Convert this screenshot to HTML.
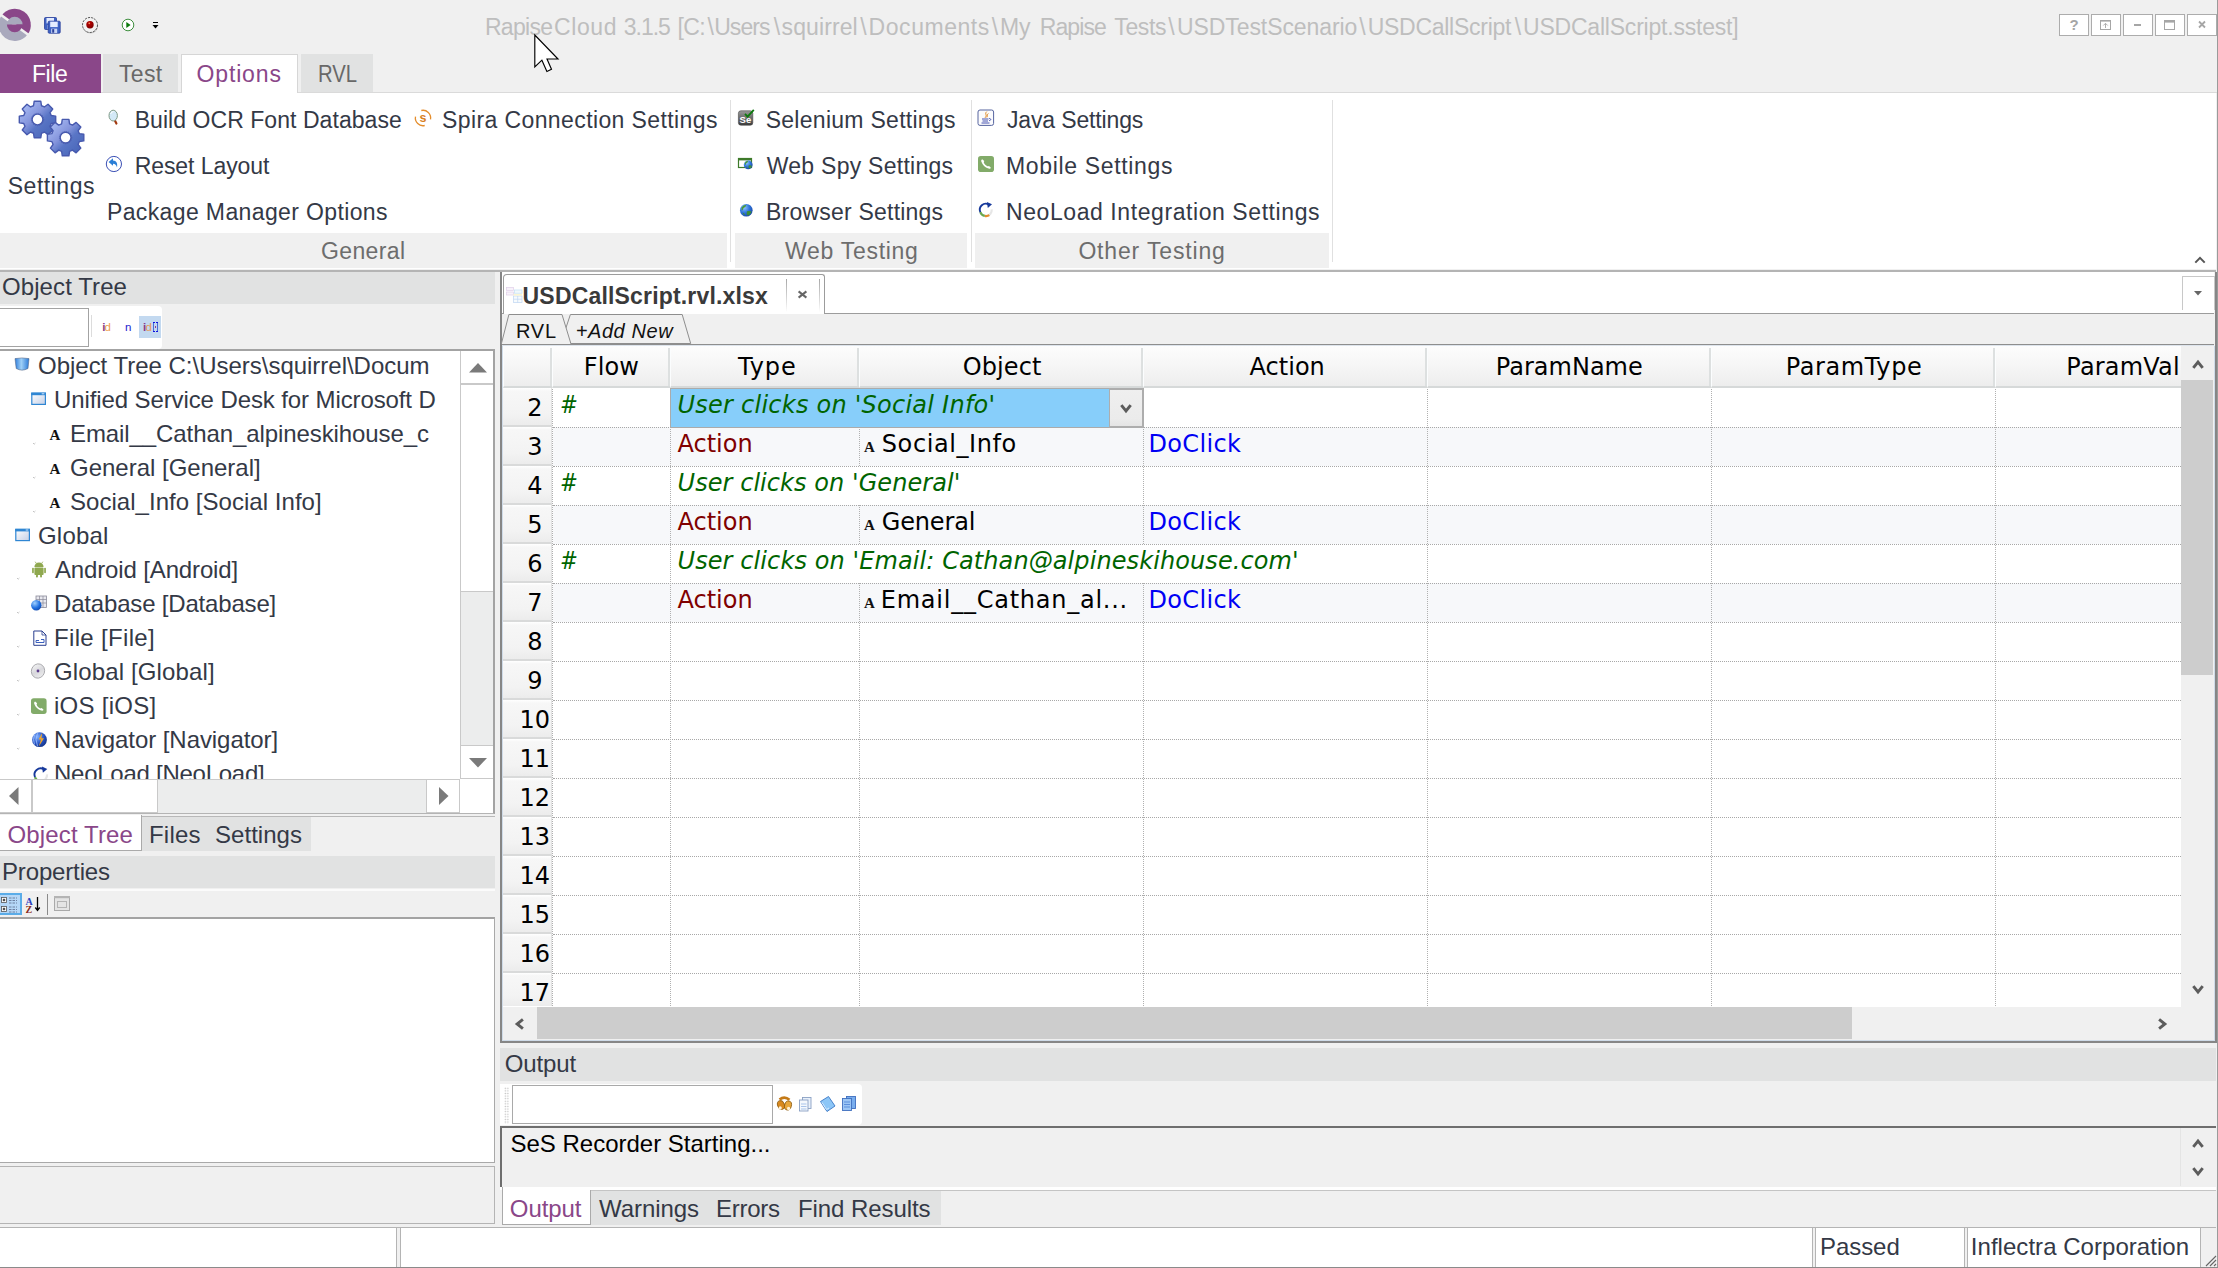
<!DOCTYPE html>
<html><head><meta charset="utf-8"><title>RapiseCloud</title>
<style>
html,body{margin:0;padding:0;}
body{width:2218px;height:1268px;overflow:hidden;background:#f0f0f0;position:relative;font-family:"Liberation Sans",Arial,sans-serif;}
div,span.t,svg{position:absolute;box-sizing:border-box;}
span.t{white-space:pre;}
.ls{font-family:"Liberation Sans",Arial,sans-serif;}
.dv{font-family:"DejaVu Sans",Verdana,"Liberation Sans",sans-serif;}
.sf{font-family:"Liberation Serif","DejaVu Serif",serif;}
</style></head><body>
<svg style="left:0px;top:0px" width="40" height="50" viewBox="0 0 40 50"><path d="M1.67 15.44 A16.1 16.1 0 0 1 27.73 34.36Z" fill="#8a4789"/><path d="M27.73 34.36 A16.1 16.1 0 0 1 1.67 15.44Z" fill="#a9a9bd"/><line x1="0.06" y1="14.26" x2="29.34" y2="35.54" stroke="#f0f0f0" stroke-width="2.6"/><path d="M6.8999999999999995 24.5 A7.8 7.8 0 0 1 22.5 24.5Z" fill="#a9a9bd"/><path d="M22.5 24.5 A7.8 7.8 0 0 1 6.8999999999999995 24.5Z" fill="#8a4789"/></svg>
<svg style="left:44px;top:17px" width="17" height="17" viewBox="0 0 17 17"><rect x="0.5" y="0.5" width="12" height="12" rx="1" fill="#3d62c4" stroke="#2a3f99" stroke-width="0.8"/><rect x="2.5" y="1.0" width="7.5" height="5.4" fill="#e4ecff"/><rect x="3.5" y="7.9399999999999995" width="6" height="4.32" fill="#c9d6f5"/><rect x="4.5" y="8.42" width="2" height="3.5999999999999996" fill="#2a3f99"/><rect x="4.2" y="4.2" width="12" height="12" rx="1" fill="#3d62c4" stroke="#2a3f99" stroke-width="0.8"/><rect x="6.2" y="4.7" width="7.5" height="5.4" fill="#e4ecff"/><rect x="7.2" y="11.64" width="6" height="4.32" fill="#c9d6f5"/><rect x="8.2" y="12.120000000000001" width="2" height="3.5999999999999996" fill="#2a3f99"/></svg>
<svg style="left:80px;top:14.8px" width="20" height="20" viewBox="0 0 20 20"><defs><radialGradient id="rg1" cx="0.4" cy="0.3" r="0.7"><stop offset="0" stop-color="#ffb070"/><stop offset="0.25" stop-color="#b00000"/><stop offset="1" stop-color="#7a0000"/></radialGradient></defs><circle cx="10.5" cy="10.8" r="7.6" fill="#c8c8c8"/><circle cx="10" cy="10" r="7.5" fill="#f2f2f2" stroke="#444" stroke-width="0.9" stroke-dasharray="2.2 1.1"/><circle cx="10" cy="9.8" r="3.7" fill="url(#rg1)"/></svg>
<svg style="left:120.1px;top:17.2px" width="16" height="16" viewBox="0 0 16 16"><circle cx="8" cy="8" r="5.8" fill="#fff" stroke="#3f8f3f" stroke-width="1"/><path d="M6.3 4.9 L10.6 8 L6.3 11.1Z" fill="#0a7a0a"/></svg>
<div style="left:153px;top:22px;width:5px;height:1px;background:#000;"></div>
<svg style="left:152px;top:25px" width="7" height="4" viewBox="0 0 7 4"><path d="M0.5 0 L6.5 0 L3.5 3.5Z" fill="#000"/></svg>
<span class="t ls" style="top:16.13px;font-size:23px;line-height:23px;color:#bebebe;left:484.9px;letter-spacing:-0.681px;">Rapise</span>
<span class="t ls" style="top:16.13px;font-size:23px;line-height:23px;color:#bebebe;left:554.1px;letter-spacing:0.574px;">Cloud</span>
<span class="t ls" style="top:16.13px;font-size:23px;line-height:23px;color:#bebebe;left:623.8px;letter-spacing:-1.041px;">3.1.5 </span>
<span class="t ls" style="top:16.13px;font-size:23px;line-height:23px;color:#bebebe;left:677.6px;letter-spacing:-0.65px;">[C:</span>
<span class="t ls" style="top:16.13px;font-size:23px;line-height:23px;color:#bebebe;left:714.2px;letter-spacing:-0.94px;">Users</span>
<span class="t ls" style="top:16.13px;font-size:23px;line-height:23px;color:#bebebe;left:781.6px;letter-spacing:0.1px;">squirrel</span>
<span class="t ls" style="top:16.13px;font-size:23px;line-height:23px;color:#bebebe;left:868.6px;letter-spacing:0.547px;">Documents</span>
<span class="t ls" style="top:16.13px;font-size:23px;line-height:23px;color:#bebebe;left:999.9px;letter-spacing:-0.059px;">My </span>
<span class="t ls" style="top:16.13px;font-size:23px;line-height:23px;color:#bebebe;left:1039.7px;letter-spacing:-0.901px;">Rapise </span>
<span class="t ls" style="top:16.13px;font-size:23px;line-height:23px;color:#bebebe;left:1114.3px;letter-spacing:-0.37px;">Tests</span>
<span class="t ls" style="top:16.13px;font-size:23px;line-height:23px;color:#bebebe;left:1177px;letter-spacing:-0.088px;">USDTestScenario</span>
<span class="t ls" style="top:16.13px;font-size:23px;line-height:23px;color:#bebebe;left:1367.7px;letter-spacing:-0.274px;">USDCallScript</span>
<span class="t ls" style="top:16.13px;font-size:23px;line-height:23px;color:#bebebe;left:1523px;letter-spacing:-0.207px;">USDCallScript.sstest]</span>
<span class="t ls" style="top:16.13px;font-size:23px;line-height:23px;color:#bebebe;left:707.4px;">\</span>
<span class="t ls" style="top:16.13px;font-size:23px;line-height:23px;color:#bebebe;left:773.8px;">\</span>
<span class="t ls" style="top:16.13px;font-size:23px;line-height:23px;color:#bebebe;left:860.3px;">\</span>
<span class="t ls" style="top:16.13px;font-size:23px;line-height:23px;color:#bebebe;left:991.8px;">\</span>
<span class="t ls" style="top:16.13px;font-size:23px;line-height:23px;color:#bebebe;left:1168.3px;">\</span>
<span class="t ls" style="top:16.13px;font-size:23px;line-height:23px;color:#bebebe;left:1359.3px;">\</span>
<span class="t ls" style="top:16.13px;font-size:23px;line-height:23px;color:#bebebe;left:1514.8px;">\</span>
<div style="left:2059px;top:14px;width:30px;height:22px;background:#fff;border:1px solid #acacac;"></div>
<div style="left:2091px;top:14px;width:30px;height:22px;background:#fff;border:1px solid #acacac;"></div>
<div style="left:2123px;top:14px;width:30px;height:22px;background:#fff;border:1px solid #acacac;"></div>
<div style="left:2155px;top:14px;width:30px;height:22px;background:#fff;border:1px solid #acacac;"></div>
<div style="left:2187px;top:14px;width:30px;height:22px;background:#fff;border:1px solid #acacac;"></div>
<span class="t ls" style="left:2059px;top:15px;width:30px;text-align:center;font-size:15px;line-height:20px;font-weight:bold;color:#a6a6a6">?</span>
<svg style="left:2091px;top:14px" width="30" height="22" viewBox="0 0 30 22"><rect x="9.5" y="6.5" width="10" height="9" fill="none" stroke="#a6a6a6" stroke-width="1"/><rect x="9" y="6" width="11" height="1.6" fill="#a6a6a6"/><path d="M14.5 14 L14.5 9.5 M12.3 11.5 L14.5 9.3 L16.7 11.5" fill="none" stroke="#a6a6a6" stroke-width="0.9"/></svg>
<div style="left:2134px;top:24px;width:7px;height:2px;background:#a6a6a6;"></div>
<svg style="left:2155px;top:14px" width="30" height="22" viewBox="0 0 30 22"><rect x="9.5" y="6.5" width="10" height="9" fill="none" stroke="#a6a6a6" stroke-width="1"/><rect x="9" y="6" width="11" height="2.6" fill="#a6a6a6"/></svg>
<svg style="left:2187px;top:14px" width="30" height="22" viewBox="0 0 30 22"><path d="M12 7.5 L18 13.5 M18 7.5 L12 13.5" stroke="#a6a6a6" stroke-width="1.8"/></svg>
<div style="left:0px;top:92px;width:2218px;height:1px;background:#dadada;"></div>
<div style="left:0px;top:54px;width:101px;height:39px;background:#8a4789;"></div>
<span class="t ls" style="top:62.53px;font-size:23px;line-height:23px;color:#fff;left:31.9px;letter-spacing:-0.39px;">File</span>
<div style="left:102.6px;top:54px;width:75.4px;height:38px;background:#e1e2e2;"></div>
<span class="t ls" style="top:62.53px;font-size:23px;line-height:23px;color:#686868;left:119px;letter-spacing:0.336px;">Test</span>
<div style="left:181px;top:54px;width:117px;height:39px;background:#fff;border:1px solid #d6d6d6;border-bottom:none;"></div>
<span class="t ls" style="top:62.53px;font-size:23px;line-height:23px;color:#8a4789;left:196.5px;letter-spacing:0.856px;">Options</span>
<div style="left:301px;top:54px;width:72px;height:38px;background:#e1e2e2;"></div>
<span class="t ls" style="top:62.53px;font-size:23px;line-height:23px;color:#686868;left:317.92px;transform:scaleX(0.882);transform-origin:0 0;">RVL</span>
<div style="left:0px;top:93px;width:2216px;height:176px;background:#fff;"></div>
<div style="left:0px;top:233px;width:727px;height:35px;background:#f0f0f0;"></div>
<div style="left:735px;top:233px;width:232px;height:35px;background:#f0f0f0;"></div>
<div style="left:975px;top:233px;width:354px;height:35px;background:#f0f0f0;"></div>
<div style="left:730px;top:100px;width:1px;height:162px;background:#e0e0e0;"></div>
<div style="left:971px;top:100px;width:1px;height:162px;background:#e0e0e0;"></div>
<div style="left:1332px;top:100px;width:1px;height:162px;background:#e0e0e0;"></div>
<svg style="left:10px;top:95px" width="80" height="66" viewBox="0 0 80 66"><defs><linearGradient id="gg" x1="0" y1="0" x2="1" y2="1"><stop offset="0.1" stop-color="#a9bcf4"/><stop offset="0.42" stop-color="#8595dc"/><stop offset="0.58" stop-color="#5a76c6"/><stop offset="1" stop-color="#4361b4"/></linearGradient></defs><path d="M23.51 10.77 L24.18 6.30 L30.82 6.30 L31.49 10.77 L34.39 11.97 L38.02 9.28 L42.72 13.98 L40.03 17.61 L41.23 20.51 L45.70 21.18 L45.70 27.82 L41.23 28.49 L40.03 31.39 L42.72 35.02 L38.02 39.72 L34.39 37.03 L31.49 38.23 L30.82 42.70 L24.18 42.70 L23.51 38.23 L20.61 37.03 L16.98 39.72 L12.28 35.02 L14.97 31.39 L13.77 28.49 L9.30 27.82 L9.30 21.18 L13.77 20.51 L14.97 17.61 L12.28 13.98 L16.98 9.28 L20.61 11.97Z M22.1 24.5 a5.4 5.4 0 1 0 10.8 0 a5.4 5.4 0 1 0 -10.8 0Z" fill="url(#gg)" fill-rule="evenodd" stroke="#4759ae" stroke-width="1.4" stroke-linejoin="round"/><circle cx="27.5" cy="24.5" r="6.2" fill="none" stroke="#4b5fae" stroke-width="1" stroke-dasharray="1.2 1" opacity="0.8"/><path d="M51.61 28.87 L52.28 24.40 L58.92 24.40 L59.59 28.87 L62.49 30.07 L66.12 27.38 L70.82 32.08 L68.13 35.71 L69.33 38.61 L73.80 39.28 L73.80 45.92 L69.33 46.59 L68.13 49.49 L70.82 53.12 L66.12 57.82 L62.49 55.13 L59.59 56.33 L58.92 60.80 L52.28 60.80 L51.61 56.33 L48.71 55.13 L45.08 57.82 L40.38 53.12 L43.07 49.49 L41.87 46.59 L37.40 45.92 L37.40 39.28 L41.87 38.61 L43.07 35.71 L40.38 32.08 L45.08 27.38 L48.71 30.07Z M50.2 42.6 a5.4 5.4 0 1 0 10.8 0 a5.4 5.4 0 1 0 -10.8 0Z" fill="url(#gg)" fill-rule="evenodd" stroke="#4759ae" stroke-width="1.4" stroke-linejoin="round"/><circle cx="55.6" cy="42.6" r="6.2" fill="none" stroke="#4b5fae" stroke-width="1" stroke-dasharray="1.2 1" opacity="0.8"/></svg>
<span class="t ls" style="top:174.53px;font-size:23px;line-height:23px;color:#343946;left:7.7px;letter-spacing:0.528px;">Settings</span>
<span class="t ls" style="top:109.03px;font-size:23px;line-height:23px;color:#343946;left:134.7px;letter-spacing:0.054px;">Build OCR Font Database</span>
<span class="t ls" style="top:155.23px;font-size:23px;line-height:23px;color:#343946;left:134.7px;letter-spacing:-0.076px;">Reset Layout</span>
<span class="t ls" style="top:201.13px;font-size:23px;line-height:23px;color:#343946;left:107px;letter-spacing:0.371px;">Package Manager Options</span>
<span class="t ls" style="top:109.03px;font-size:23px;line-height:23px;color:#343946;left:442px;letter-spacing:0.398px;">Spira Connection Settings</span>
<span class="t ls" style="top:109.03px;font-size:23px;line-height:23px;color:#343946;left:765.7px;letter-spacing:0.276px;">Selenium Settings</span>
<span class="t ls" style="top:155.23px;font-size:23px;line-height:23px;color:#343946;left:766.7px;letter-spacing:0.267px;">Web Spy Settings</span>
<span class="t ls" style="top:201.13px;font-size:23px;line-height:23px;color:#343946;left:766px;letter-spacing:0.217px;">Browser Settings</span>
<span class="t ls" style="top:109.03px;font-size:23px;line-height:23px;color:#343946;left:1007px;letter-spacing:-0.148px;">Java Settings</span>
<span class="t ls" style="top:155.23px;font-size:23px;line-height:23px;color:#343946;left:1006px;letter-spacing:0.661px;">Mobile Settings</span>
<span class="t ls" style="top:201.13px;font-size:23px;line-height:23px;color:#343946;left:1006px;letter-spacing:0.577px;">NeoLoad Integration Settings</span>
<span class="t ls" style="top:240.13px;font-size:23px;line-height:23px;color:#6d6d6d;left:321px;letter-spacing:0.381px;">General</span>
<span class="t ls" style="top:240.13px;font-size:23px;line-height:23px;color:#6d6d6d;left:785px;letter-spacing:0.715px;">Web Testing</span>
<span class="t ls" style="top:240.13px;font-size:23px;line-height:23px;color:#6d6d6d;left:1078.4px;letter-spacing:0.842px;">Other Testing</span>
<svg style="left:106px;top:108px" width="16" height="18" viewBox="0 0 16 18"><line x1="8.9" y1="12.6" x2="10.4" y2="15.6" stroke="#a33a10" stroke-width="2.2" stroke-linecap="round"/><ellipse cx="7.2" cy="7.6" rx="4.2" ry="5.4" fill="#d3e9f7" stroke="#7f9a86" stroke-width="1"/><path d="M4.6 6 A3 4 0 0 1 7.6 3.6" stroke="#fff" stroke-width="1" fill="none"/></svg>
<svg style="left:105px;top:155px" width="18" height="18" viewBox="0 0 18 18"><circle cx="8.9" cy="9" r="7.6" fill="#fff" stroke="#3b50b5" stroke-width="1"/><path d="M3.6 7 L8 3.2 L8 5.6 C11.5 5.6 12.8 8.5 12 12.6 C11.3 10 10.2 8.8 8 8.8 L8 10.8Z" fill="#2b7fd6"/></svg>
<svg style="left:413px;top:108px" width="20" height="20" viewBox="0 0 20 20"><path d="M8.3 2.5 A7.6 7.6 0 0 1 17.5 11.3" fill="none" stroke="#e48d2c" stroke-width="1.3"/><path d="M11.7 17.5 A7.6 7.6 0 0 1 2.5 8.7" fill="none" stroke="#e48d2c" stroke-width="1.3"/><text x="10" y="13.6" text-anchor="middle" font-family="Liberation Sans,Arial,sans-serif" font-weight="bold" font-size="12.5" fill="#d9811f">s</text></svg>
<svg style="left:737px;top:108px" width="19" height="19" viewBox="0 0 19 19"><defs><linearGradient id="seg" x1="0" y1="0" x2="0" y2="1"><stop offset="0" stop-color="#9a9a9a"/><stop offset="1" stop-color="#3c3c3c"/></linearGradient></defs><rect x="1.4" y="2.8" width="14.4" height="14.4" rx="2.5" fill="url(#seg)" stroke="#444" stroke-width="0.6"/><text x="8.4" y="14.6" text-anchor="middle" font-family="Liberation Sans,Arial,sans-serif" font-weight="bold" font-size="9.5" fill="#fff">Se</text><path d="M8 5.8 L10.6 8.6 L16.8 1.8" fill="none" stroke="#0d7a0d" stroke-width="1.8"/></svg>
<svg style="left:737px;top:157px" width="18" height="14" viewBox="0 0 18 14"><rect x="1.5" y="1.5" width="13" height="9" fill="#fff" stroke="#3e7a2a" stroke-width="1.2"/><rect x="1" y="1" width="14" height="2.4" fill="#3e7a2a"/><defs><radialGradient id="gl2" cx="0.35" cy="0.3" r="0.8"><stop offset="0" stop-color="#8fc3ff"/><stop offset="0.5" stop-color="#2f75dd"/><stop offset="1" stop-color="#173f9c"/></radialGradient></defs><circle cx="11.2" cy="7.8" r="4.4" fill="url(#gl2)"/><path d="M7.899999999999999 5.819999999999999 q1.32 -1.9800000000000002 3.3000000000000003 -1.9800000000000002 q-0.44000000000000006 2.2 -1.9800000000000002 2.4200000000000004 q-0.44000000000000006 1.9800000000000002 -1.32 1.54Z" fill="#4a9a3a"/><path d="M11.639999999999999 8.459999999999999 q2.2 -0.44000000000000006 3.3000000000000003 0.44000000000000006 q-0.8800000000000001 2.2 -2.64 2.64 q-1.32 -1.32 -0.66 -3.08Z" fill="#3e8f35"/><path d="M8.559999999999999 9.34 q1.32 0.22000000000000003 1.7600000000000002 1.9800000000000002 q-1.32 -0.22000000000000003 -1.7600000000000002 -1.9800000000000002Z" fill="#3e8f35"/></svg>
<svg style="left:739.1px;top:203.0px" width="14.6" height="14.6" viewBox="0 0 14.6 14.6"><defs><radialGradient id="gl1" cx="0.35" cy="0.3" r="0.8"><stop offset="0" stop-color="#8fc3ff"/><stop offset="0.5" stop-color="#2f75dd"/><stop offset="1" stop-color="#173f9c"/></radialGradient></defs><circle cx="7.3" cy="7.3" r="6.3" fill="url(#gl1)"/><path d="M2.575 4.465 q1.89 -2.835 4.725 -2.835 q-0.63 3.15 -2.835 3.4650000000000003 q-0.63 2.835 -1.89 2.2049999999999996Z" fill="#4a9a3a"/><path d="M7.93 8.245 q3.15 -0.63 4.725 0.63 q-1.26 3.15 -3.78 3.78 q-1.89 -1.89 -0.945 -4.409999999999999Z" fill="#3e8f35"/><path d="M3.52 9.504999999999999 q1.89 0.315 2.52 2.835 q-1.89 -0.315 -2.52 -2.835Z" fill="#3e8f35"/></svg>
<svg style="left:977px;top:109px" width="18" height="18" viewBox="0 0 18 18"><rect x="1" y="1" width="15.6" height="15.4" rx="2" fill="#fbfbfd" stroke="#56649f" stroke-width="1"/><path d="M9.8 2.6 C7 5 11 6 8 8.8 M11.3 4.5 C9.6 6 11 6.8 9.8 8.4" fill="none" stroke="#e0851c" stroke-width="1"/><path d="M5 10 H11.5 M12 9.5 C14.3 9.3 14.3 11.6 12 11.6 M5.5 12 H11 M4.5 14 H12.5" fill="none" stroke="#4653b0" stroke-width="1"/></svg>
<svg style="left:978px;top:156px" width="16" height="16" viewBox="0 0 16 16"><rect x="0" y="0" width="16" height="16" rx="2.8" fill="#82ab69"/><path transform="translate(0,0) scale(1.0)" d="M4.2 3.2 C3.2 3.6 3 4.6 3.4 5.8 C4.6 9 7 11.4 10.4 12.6 C11.6 13 12.6 12.6 12.9 11.7 L11 9.9 C10.4 10.2 10 10.5 9.4 10.3 C7.8 9.6 6.5 8.3 5.8 6.6 C5.7 6 6 5.6 6.3 5.1Z" fill="#fff"/></svg>
<svg style="left:975.9px;top:199.7px" width="20" height="20" viewBox="0 0 20 20"><path d="M15.7 9.4 A6 6 0 0 1 10 16" fill="none" stroke="#e6e6e6" stroke-width="2.2"/><path d="M13.3 15.1 A6 6 0 0 1 8.8 15.879999999999999" fill="none" stroke="#e48d2c" stroke-width="2.2"/><path d="M8.8 15.879999999999999 A6 6 0 0 1 4.300000000000001 12.1" fill="none" stroke="#6aa84f" stroke-width="2.2"/><path d="M4.300000000000001 12.1 A6 6 0 0 1 12.7 4.4799999999999995" fill="none" stroke="#17399b" stroke-width="1.9"/><path d="M10.9 1.8999999999999986 L16.0 4.300000000000001 L11.8 7.9Z" fill="#17399b"/></svg>
<svg style="left:2194px;top:255.5px" width="12" height="8" viewBox="0 0 12 8"><path d="M1.3 6.6 L6 1.9 L10.7 6.6" fill="none" stroke="#555" stroke-width="2"/></svg>
<div style="left:0px;top:270px;width:2216px;height:2px;background:#b4b4b4;"></div>
<div style="left:2217px;top:0px;width:1px;height:1268px;background:#9a9a9a;"></div>
<div style="left:0px;top:272px;width:495px;height:32px;background:#e1e2e2;"></div>
<span class="t ls" style="top:275.18px;font-size:24px;line-height:24px;color:#343946;left:2px;letter-spacing:0.086px;">Object Tree</span>
<div style="left:0px;top:306px;width:162px;height:43px;background:#fff;border-radius:0 4px 4px 0;"></div>
<div style="left:-2px;top:308px;width:91px;height:39px;background:#fff;border:1.5px solid #a3a3a3;"></div>
<div style="left:91px;top:315px;width:1px;height:22px;background:#dcdcdc;"></div>
<span class="t ls" style="top:322.27px;font-size:11.5px;line-height:11.5px;color:#8a3a8a;left:102.2px;font-weight:bold;">i</span>
<span class="t ls" style="top:322.27px;font-size:11.5px;line-height:11.5px;color:#f0a050;left:104.6px;">d</span>
<span class="t ls" style="top:322.27px;font-size:11.5px;line-height:11.5px;color:#2222d0;left:125px;">n</span>
<div style="left:139px;top:316px;width:22px;height:22px;background:#c3d9f0;"></div>
<span class="t ls" style="top:322.27px;font-size:11.5px;line-height:11.5px;color:#8a3a8a;left:143px;font-weight:bold;">i</span>
<span class="t ls" style="top:322.27px;font-size:11.5px;line-height:11.5px;color:#e89858;left:145.6px;">d</span>
<div style="left:152.6px;top:322px;width:1.3px;height:10px;background:#4a6ad8;"></div>
<div style="left:152.6px;top:322px;width:2.1px;height:1.4px;background:#1010e0;"></div>
<div style="left:152.6px;top:330.6px;width:2.1px;height:1.4px;background:#1010e0;"></div>
<div style="left:157px;top:322px;width:1.3px;height:10px;background:#4a6ad8;"></div>
<div style="left:156.1px;top:322px;width:2.2px;height:1.4px;background:#1010e0;"></div>
<div style="left:156.1px;top:330.6px;width:2.2px;height:1.4px;background:#1010e0;"></div>
<div style="left:154.7px;top:326.2px;width:1.4px;height:1.8px;background:#9a3a8a;"></div>
<div style="left:0px;top:349px;width:495px;height:465px;background:#fff;border:2px solid #a3a3a3;border-left:none;border-bottom:1px solid #b4b4b4;"></div>
<div style="left:460px;top:351px;width:33px;height:428px;background:#eceded;border-left:1px solid #c9c9c9;"></div>
<div style="left:460px;top:351px;width:33px;height:33px;background:#fff;border:1px solid #c9c9c9;border-top:none;border-right:none;"></div>
<div style="left:460px;top:384px;width:33px;height:208px;background:#fff;border:1px solid #c9c9c9;border-right:none;"></div>
<div style="left:460px;top:745px;width:33px;height:34px;background:#fff;border:1px solid #c9c9c9;border-right:none;"></div>
<svg style="left:469px;top:363px" width="18" height="10" viewBox="0 0 18 10"><path d="M0 9.5 L9 0 L18 9.5Z" fill="#7a7a7a"/></svg>
<svg style="left:469px;top:757.8px" width="18" height="10" viewBox="0 0 18 10"><path d="M0 0 L18 0 L9 9.5Z" fill="#7a7a7a"/></svg>
<div style="left:0px;top:779px;width:460px;height:34px;background:#eceded;border-top:1px solid #c9c9c9;"></div>
<div style="left:0px;top:779px;width:32px;height:34px;background:#fff;border:1px solid #c9c9c9;border-left:none;"></div>
<div style="left:32px;top:779px;width:126px;height:34px;background:#fff;border:1px solid #c9c9c9;"></div>
<div style="left:426px;top:779px;width:34px;height:34px;background:#fff;border:1px solid #c9c9c9;"></div>
<div style="left:460px;top:779px;width:33px;height:34px;background:#fff;"></div>
<svg style="left:9px;top:787px" width="10" height="18" viewBox="0 0 10 18"><path d="M9.5 0 L9.5 18 L0 9Z" fill="#7a7a7a"/></svg>
<svg style="left:439px;top:787px" width="10" height="18" viewBox="0 0 10 18"><path d="M0 0 L9.5 9 L0 18Z" fill="#7a7a7a"/></svg>
<span class="t ls" style="top:354.18px;font-size:24px;line-height:24px;color:#343946;left:38px;letter-spacing:-0.016px;">Object Tree C:\Users\squirrel\Docum</span>
<span class="t ls" style="top:388.18px;font-size:24px;line-height:24px;color:#343946;left:54px;letter-spacing:-0.103px;">Unified Service Desk for Microsoft D</span>
<span class="t ls" style="top:422.18px;font-size:24px;line-height:24px;color:#343946;left:70px;letter-spacing:-0.089px;">Email__Cathan_alpineskihouse_c</span>
<span class="t ls" style="top:456.18px;font-size:24px;line-height:24px;color:#343946;left:70px;letter-spacing:-0.006px;">General [General]</span>
<span class="t ls" style="top:490.18px;font-size:24px;line-height:24px;color:#343946;left:70px;letter-spacing:0.035px;">Social_Info [Social Info]</span>
<span class="t ls" style="top:524.18px;font-size:24px;line-height:24px;color:#343946;left:38px;letter-spacing:0.191px;">Global</span>
<span class="t ls" style="top:558.18px;font-size:24px;line-height:24px;color:#343946;left:55px;letter-spacing:-0.143px;">Android [Android]</span>
<span class="t ls" style="top:592.18px;font-size:24px;line-height:24px;color:#343946;left:54px;letter-spacing:-0.178px;">Database [Database]</span>
<span class="t ls" style="top:626.18px;font-size:24px;line-height:24px;color:#343946;left:54px;letter-spacing:0.332px;">File [File]</span>
<span class="t ls" style="top:660.18px;font-size:24px;line-height:24px;color:#343946;left:54px;letter-spacing:0.137px;">Global [Global]</span>
<span class="t ls" style="top:694.18px;font-size:24px;line-height:24px;color:#343946;left:54px;letter-spacing:0.269px;">iOS [iOS]</span>
<span class="t ls" style="top:728.18px;font-size:24px;line-height:24px;color:#343946;left:54px;letter-spacing:-0.063px;">Navigator [Navigator]</span>
<div style="left:0;top:755px;width:460px;height:24px;overflow:hidden">
<span class="t ls" style="top:7.18px;font-size:24px;line-height:24px;color:#343946;left:54px;letter-spacing:-0.261px;">NeoLoad [NeoLoad]</span>
<svg style="left:30.9px;top:10px" width="20" height="20" viewBox="0 0 20 20"><path d="M15.985 9.37 A6.3 6.3 0 0 1 10 16.3" fill="none" stroke="#e6e6e6" stroke-width="2.2"/><path d="M13.465 15.355 A6.3 6.3 0 0 1 8.74 16.174" fill="none" stroke="#e48d2c" stroke-width="2.2"/><path d="M8.74 16.174 A6.3 6.3 0 0 1 4.015000000000001 12.205" fill="none" stroke="#6aa84f" stroke-width="2.2"/><path d="M4.015000000000001 12.205 A6.3 6.3 0 0 1 12.835 4.204" fill="none" stroke="#17399b" stroke-width="1.9"/><path d="M10.945 1.4949999999999992 L16.3 4.015000000000001 L11.89 7.795Z" fill="#17399b"/></svg>
</div>
<svg style="left:0;top:0" width="60" height="779" viewBox="0 0 60 779"><defs><linearGradient id="bk" x1="0" y1="0" x2="1" y2="0"><stop offset="0" stop-color="#2f7ddb"/><stop offset="0.45" stop-color="#9fd0f7"/><stop offset="1" stop-color="#2c7bd8"/></linearGradient></defs><path d="M15 358.6 Q22 357.2 29 358.6 L28 368.5 Q22 371.8 16.2 368.5Z" fill="url(#bk)" stroke="#4a5a78" stroke-width="0.5"/><defs><linearGradient id="wi31392" x1="0" y1="0" x2="1" y2="1"><stop offset="0" stop-color="#ffffff"/><stop offset="1" stop-color="#c4cfe6"/></linearGradient></defs><rect x="31.8" y="393.20000000000005" width="13.6" height="11.2" fill="url(#wi31392)" stroke="#2f86d3" stroke-width="1.2"/><rect x="31.2" y="392.6" width="14.8" height="2.6" fill="#2f86d3"/><rect x="41.7" y="393.3" width="2.6" height="1" fill="#cfe6ff"/><defs><linearGradient id="wi15528" x1="0" y1="0" x2="1" y2="1"><stop offset="0" stop-color="#ffffff"/><stop offset="1" stop-color="#c4cfe6"/></linearGradient></defs><rect x="15.799999999999999" y="529.4" width="13.6" height="11.2" fill="url(#wi15528)" stroke="#2f86d3" stroke-width="1.2"/><rect x="15.2" y="528.8" width="14.8" height="2.6" fill="#2f86d3"/><rect x="25.7" y="529.5" width="2.6" height="1" fill="#cfe6ff"/><g fill="#8fa84f"><path d="M34.4 566.9 a4.6 4.4 0 0 1 9.2 0Z"/><rect x="34.4" y="567.5" width="9.2" height="7.4" rx="1"/><rect x="32.1" y="567.7" width="1.7" height="5.6" rx="0.8"/><rect x="44.2" y="567.7" width="1.7" height="5.6" rx="0.8"/><rect x="36" y="574.5" width="1.9" height="3" rx="0.8"/><rect x="40.1" y="574.5" width="1.9" height="3" rx="0.8"/><path d="M36.4 563.5 L35.2 561.7 M41.6 563.5 L42.8 561.7" stroke="#8fa84f" stroke-width="0.8"/></g><rect x="36" y="596" width="10.5" height="11.5" fill="#e8e8ee" stroke="#8a8a9a" stroke-width="0.8"/><path d="M36 599.5 H46.5 M36 603 H46.5 M39.5 596 V607.5 M43 596 V607.5" stroke="#8a8a9a" stroke-width="0.7"/><defs><radialGradient id="dbg" cx="0.35" cy="0.3" r="0.8"><stop offset="0" stop-color="#9fd0ff"/><stop offset="0.6" stop-color="#1f6fe0"/><stop offset="1" stop-color="#1246a8"/></radialGradient></defs><circle cx="36.3" cy="605.2" r="5.2" fill="url(#dbg)"/><path d="M33.8 631 H42 L46 635 V645.3 H33.8Z" fill="#fff" stroke="#2a3f8f" stroke-width="1"/><path d="M42 631 V635 H46" fill="none" stroke="#2a3f8f" stroke-width="0.8"/><path d="M36 642.5 H44 V639.5 H41 M36 642.5 V640.5 H39" fill="none" stroke="#3a5fbf" stroke-width="1"/><defs><linearGradient id="cdg" x1="0" y1="0" x2="1" y2="1"><stop offset="0" stop-color="#fafafa"/><stop offset="0.5" stop-color="#d8d8dc"/><stop offset="1" stop-color="#f4f4f4"/></linearGradient></defs><ellipse cx="38" cy="671" rx="6.6" ry="7.2" transform="rotate(18 38 671)" fill="url(#cdg)" stroke="#a9a9ad" stroke-width="0.9"/><circle cx="38" cy="671" r="1.4" fill="#5a3a8a"/><rect x="31" y="698.3" width="15.6" height="15.6" rx="2.73" fill="#82ab69"/><path transform="translate(31,698.3) scale(0.975)" d="M4.2 3.2 C3.2 3.6 3 4.6 3.4 5.8 C4.6 9 7 11.4 10.4 12.6 C11.6 13 12.6 12.6 12.9 11.7 L11 9.9 C10.4 10.2 10 10.5 9.4 10.3 C7.8 9.6 6.5 8.3 5.8 6.6 C5.7 6 6 5.6 6.3 5.1Z" fill="#fff"/><defs><radialGradient id="nvg" cx="0.35" cy="0.3" r="0.8"><stop offset="0" stop-color="#7fb0ff"/><stop offset="0.6" stop-color="#2450c0"/><stop offset="1" stop-color="#14307a"/></radialGradient></defs><circle cx="39.5" cy="739.7" r="7.4" fill="url(#nvg)"/><path d="M37.5 733.2 q-3 6 0 13 M34.5 735 q-2 4.5 0 9.5" stroke="#9fc0ff" stroke-width="0.8" fill="none"/><path d="M42.3 732.8 L38.6 739.6 L41 739.6 L38.8 746.6 L44 738.2 L41.4 738.2Z" fill="#f5a623"/><path d="M33 443 l1.2 1.2 l1.2 -1.2" fill="none" stroke="#b4b4b4" stroke-width="0.8"/><path d="M33 477 l1.2 1.2 l1.2 -1.2" fill="none" stroke="#b4b4b4" stroke-width="0.8"/><path d="M33 511 l1.2 1.2 l1.2 -1.2" fill="none" stroke="#b4b4b4" stroke-width="0.8"/><path d="M17 578 l1.2 1.2 l1.2 -1.2" fill="none" stroke="#b4b4b4" stroke-width="0.8"/><path d="M17 612 l1.2 1.2 l1.2 -1.2" fill="none" stroke="#b4b4b4" stroke-width="0.8"/><path d="M17 646 l1.2 1.2 l1.2 -1.2" fill="none" stroke="#b4b4b4" stroke-width="0.8"/><path d="M17 680 l1.2 1.2 l1.2 -1.2" fill="none" stroke="#b4b4b4" stroke-width="0.8"/><path d="M17 714 l1.2 1.2 l1.2 -1.2" fill="none" stroke="#b4b4b4" stroke-width="0.8"/><path d="M17 748 l1.2 1.2 l1.2 -1.2" fill="none" stroke="#b4b4b4" stroke-width="0.8"/></svg>
<span class="t sf" style="top:428.3px;font-size:15px;line-height:15px;color:#111;left:49.4px;font-weight:bold;">A</span>
<span class="t sf" style="top:462.3px;font-size:15px;line-height:15px;color:#111;left:49.4px;font-weight:bold;">A</span>
<span class="t sf" style="top:496.3px;font-size:15px;line-height:15px;color:#111;left:49.4px;font-weight:bold;">A</span>
<div style="left:142px;top:816px;width:353px;height:1px;background:#b8b8b8;"></div>
<div style="left:142px;top:817px;width:169px;height:34px;background:#e1e2e2;"></div>
<div style="left:0px;top:815px;width:142px;height:36px;background:#fff;border-right:1px solid #aaa;border-bottom:1px solid #aaa;"></div>
<span class="t ls" style="top:823.08px;font-size:24px;line-height:24px;color:#8a4789;left:7.5px;letter-spacing:0.136px;">Object Tree</span>
<span class="t ls" style="top:823.08px;font-size:24px;line-height:24px;color:#343946;left:149px;letter-spacing:0.207px;">Files</span>
<span class="t ls" style="top:823.08px;font-size:24px;line-height:24px;color:#343946;left:215px;letter-spacing:0.04px;">Settings</span>
<div style="left:0px;top:856px;width:495px;height:32px;background:#e1e2e2;"></div>
<span class="t ls" style="top:859.68px;font-size:24px;line-height:24px;color:#343946;left:2px;letter-spacing:-0.154px;">Properties</span>
<div style="left:0px;top:889px;width:495px;height:2px;background:#fbfbfb;"></div>
<div style="left:0px;top:893px;width:22px;height:22px;background:#b5d7f7;border:2px solid #5aace8;border-left:none;"></div>
<svg style="left:0;top:0" width="80" height="920" viewBox="0 0 80 920"><rect x="1.5" y="897.5" width="5" height="5" fill="#fff" stroke="#555" stroke-width="0.8"/><path d="M2.7 900 h2.6 M4 898.7 v2.6" stroke="#000" stroke-width="0.9"/><path d="M9 898 h8 M9 900.5 h8 M9 903 h8" stroke="#5a6a8a" stroke-width="0.8" stroke-dasharray="2.5 1"/><rect x="1.5" y="906.5" width="5" height="5" fill="#fff" stroke="#555" stroke-width="0.8"/><path d="M2.7 909 h2.6 M4 907.7 v2.6" stroke="#000" stroke-width="0.9"/><path d="M9 907 h8 M9 909.5 h8 M9 912 h8" stroke="#5a6a8a" stroke-width="0.8" stroke-dasharray="2.5 1"/><path d="M37.5 897 V910 M35.3 907.5 L37.5 910.5 L39.7 907.5" stroke="#000" stroke-width="1.3" fill="none"/><rect x="54.5" y="896.5" width="15" height="14" fill="#e4e4e4" stroke="#a9a9a9" stroke-width="1"/><rect x="54" y="896" width="16" height="2.2" fill="#b4b4b4"/><rect x="57.5" y="901.5" width="9" height="6" fill="none" stroke="#b4b4b4" stroke-width="1"/></svg>
<span class="t sf" style="top:896.53px;font-size:10px;line-height:10px;color:#2a3fbf;left:25.5px;font-weight:bold;">A</span>
<span class="t sf" style="top:905.03px;font-size:10px;line-height:10px;color:#8a2a1a;left:25.5px;font-weight:bold;">Z</span>
<div style="left:47px;top:894px;width:1px;height:21px;background:#8a8a8a;"></div>
<div style="left:0px;top:917px;width:495px;height:246px;background:#fff;border:1px solid #a9a9a9;border-left:none;border-top:2px solid #a3a3a3;"></div>
<div style="left:0px;top:1166px;width:495px;height:58px;background:#f0f0f0;border:1px solid #b4b4b4;border-left:none;"></div>
<div style="left:0px;top:1227px;width:2216px;height:41px;background:#f0f0f0;border-top:1px solid #b4b4b4;"></div>
<div style="left:0px;top:1227px;width:397px;height:41px;background:#fff;border:1px solid #b4b4b4;border-left:none;"></div>
<div style="left:400px;top:1227px;width:1413px;height:41px;background:#fff;border:1px solid #b4b4b4;"></div>
<div style="left:1815px;top:1227px;width:150px;height:41px;background:#fff;border:1px solid #b4b4b4;"></div>
<div style="left:1967px;top:1227px;width:234px;height:41px;background:#fff;border:1px solid #b4b4b4;"></div>
<span class="t ls" style="top:1235.28px;font-size:24px;line-height:24px;color:#343946;left:1820px;letter-spacing:-0.061px;">Passed</span>
<span class="t ls" style="top:1235.28px;font-size:24px;line-height:24px;color:#343946;left:1970.8px;letter-spacing:0.04px;">Inflectra Corporation</span>
<div style="left:0px;top:1267px;width:2218px;height:1px;background:#8a8a8a;"></div>
<svg style="left:2201px;top:1251px" width="16" height="16" viewBox="0 0 16 16"><path d="M15 5 L5 15 M15 9 L9 15 M15 13 L13 15" stroke="#666" stroke-width="1.1"/></svg>
<div style="left:500px;top:272px;width:2px;height:771px;background:#868686;"></div>
<div style="left:500px;top:1041px;width:1717px;height:2px;background:#868686;"></div>
<div style="left:502px;top:1040px;width:1713px;height:1px;background:#cfdbe8;"></div>
<div style="left:2215px;top:272px;width:2px;height:771px;background:#868686;"></div>
<div style="left:2214px;top:346px;width:1px;height:694px;background:#cfdbe8;"></div>
<div style="left:502px;top:346px;width:1px;height:694px;background:#cfdbe8;"></div>
<div style="left:502px;top:272px;width:1712px;height:42px;background:#fff;"></div>
<div style="left:502px;top:313px;width:1712px;height:1px;background:#9c9c9c;"></div>
<div style="left:502px;top:314px;width:1712px;height:30px;background:#f0f0f0;"></div>
<div style="left:502px;top:344px;width:1712px;height:1px;background:#8e8e8e;"></div>
<div style="left:502px;top:345px;width:1712px;height:1px;background:#dde4ec;"></div>
<div style="left:503px;top:274px;width:322px;height:40px;background:#fff;border:1px solid #9c9c9c;border-bottom:none;border-radius:4px 3px 0 0;"></div>
<div style="left:786px;top:279px;width:1px;height:33px;background:linear-gradient(#a8a8a8,#d8d8d8 60%,#fff);"></div>
<div style="left:819px;top:279px;width:1px;height:33px;background:linear-gradient(#a8a8a8,#d8d8d8 60%,#fff);"></div>
<svg style="left:506px;top:286px" width="18" height="18" viewBox="0 0 18 18"><g opacity="0.55"><rect x="0.5" y="1.5" width="7" height="3" fill="#f2e8f6" stroke="#c9a8d8" stroke-width="0.7"/><rect x="0.5" y="6" width="7" height="3" fill="#f2e8f6" stroke="#c9a8d8" stroke-width="0.7"/><rect x="8.5" y="4" width="7.5" height="3.2" fill="#e8f4fb" stroke="#8ec6ea" stroke-width="0.7"/><rect x="7.5" y="10" width="8.5" height="6.5" fill="#f2f8fd" stroke="#8ab4e8" stroke-width="0.7"/><path d="M7.5 13.2 H16 M11.7 10 V16.5" stroke="#8ab4e8" stroke-width="0.7"/><rect x="7.5" y="8" width="8.5" height="1.6" fill="#f7eeb0"/></g></svg>
<span class="t ls" style="top:284.53px;font-size:23px;line-height:23px;color:#3a3a3a;left:522.6px;letter-spacing:0.171px;font-weight:bold;">USDCallScript.rvl.xlsx</span>
<svg style="left:797px;top:290px" width="11" height="9" viewBox="0 0 11 9"><path d="M1.6 1.4 L9.4 7.6 M9.4 1.4 L1.6 7.6" stroke="#666" stroke-width="2"/></svg>
<div style="left:2182px;top:276px;width:33px;height:34px;background:#fff;border:1px solid #c8c8c8;border-bottom:none;"></div>
<svg style="left:2194px;top:291px" width="8" height="5" viewBox="0 0 8 5"><path d="M0 0 L8 0 L4 4.5Z" fill="#666"/></svg>
<svg style="left:498px;top:312px" width="200" height="34" viewBox="0 0 200 34"><path d="M67.7 16.6 L72.4 2.5 L184.2 2.5 L192.7 31.5 L73 31.5" fill="#f0f0f0" stroke="#8e8e8e" stroke-width="1"/><path d="M3.3 32 L10.9 2.5 L64 2.5 L73 32" fill="#f0f0f0" stroke="#8e8e8e" stroke-width="1"/></svg>
<span class="t ls" style="top:320.87px;font-size:20px;line-height:20px;color:#111;left:516px;letter-spacing:0.789px;">RVL</span>
<span class="t ls" style="top:320.87px;font-size:20px;line-height:20px;color:#111;left:575.7px;letter-spacing:0.587px;font-style:italic;">+Add New</span>
<div style="left:503px;top:346px;width:1678px;height:661px;background:#fff;"></div>
<div style="left:553px;top:427px;width:1628px;height:39px;background:#f7f8fa;"></div>
<div style="left:553px;top:505px;width:1628px;height:39px;background:#f7f8fa;"></div>
<div style="left:553px;top:583px;width:1628px;height:39px;background:#f7f8fa;"></div>
<div style="left:503px;top:346px;width:49px;height:42px;background:linear-gradient(#fdfdfd,#f5f5f5 55%,#ededed);border-left:1px solid #fbfdfe;border-bottom:2px solid #d6d9d9;"></div>
<div style="left:550px;top:348px;width:2px;height:38px;background:#dde0e0;"></div>
<div style="left:552px;top:346px;width:118px;height:42px;background:linear-gradient(#fdfdfd,#f5f5f5 55%,#ededed);border-left:1px solid #fbfdfe;border-bottom:2px solid #d6d9d9;"></div>
<div style="left:668px;top:348px;width:2px;height:38px;background:#dde0e0;"></div>
<div style="left:670px;top:346px;width:189px;height:42px;background:linear-gradient(#fdfdfd,#f5f5f5 55%,#ededed);border-left:1px solid #fbfdfe;border-bottom:2px solid #d6d9d9;"></div>
<div style="left:857px;top:348px;width:2px;height:38px;background:#dde0e0;"></div>
<div style="left:859px;top:346px;width:284px;height:42px;background:linear-gradient(#fdfdfd,#f5f5f5 55%,#ededed);border-left:1px solid #fbfdfe;border-bottom:2px solid #d6d9d9;"></div>
<div style="left:1141px;top:348px;width:2px;height:38px;background:#dde0e0;"></div>
<div style="left:1143px;top:346px;width:284px;height:42px;background:linear-gradient(#fdfdfd,#f5f5f5 55%,#ededed);border-left:1px solid #fbfdfe;border-bottom:2px solid #d6d9d9;"></div>
<div style="left:1425px;top:348px;width:2px;height:38px;background:#dde0e0;"></div>
<div style="left:1427px;top:346px;width:284px;height:42px;background:linear-gradient(#fdfdfd,#f5f5f5 55%,#ededed);border-left:1px solid #fbfdfe;border-bottom:2px solid #d6d9d9;"></div>
<div style="left:1709px;top:348px;width:2px;height:38px;background:#dde0e0;"></div>
<div style="left:1711px;top:346px;width:284px;height:42px;background:linear-gradient(#fdfdfd,#f5f5f5 55%,#ededed);border-left:1px solid #fbfdfe;border-bottom:2px solid #d6d9d9;"></div>
<div style="left:1993px;top:348px;width:2px;height:38px;background:#dde0e0;"></div>
<div style="left:1995px;top:346px;width:186px;height:42px;background:linear-gradient(#fdfdfd,#f5f5f5 55%,#ededed);border-left:1px solid #fbfdfe;border-bottom:2px solid #d6d9d9;"></div>
<div style="left:503px;top:388px;width:49px;height:39px;background:linear-gradient(#ffffff,#f7f7f7 8%,#f3f3f3 70%,#ececec);border-right:1px solid #e2e2e2;border-bottom:2px solid #d9dada;"></div>
<div style="left:503px;top:427px;width:49px;height:39px;background:linear-gradient(#ffffff,#f7f7f7 8%,#f3f3f3 70%,#ececec);border-right:1px solid #e2e2e2;border-bottom:2px solid #d9dada;"></div>
<div style="left:503px;top:466px;width:49px;height:39px;background:linear-gradient(#ffffff,#f7f7f7 8%,#f3f3f3 70%,#ececec);border-right:1px solid #e2e2e2;border-bottom:2px solid #d9dada;"></div>
<div style="left:503px;top:505px;width:49px;height:39px;background:linear-gradient(#ffffff,#f7f7f7 8%,#f3f3f3 70%,#ececec);border-right:1px solid #e2e2e2;border-bottom:2px solid #d9dada;"></div>
<div style="left:503px;top:544px;width:49px;height:39px;background:linear-gradient(#ffffff,#f7f7f7 8%,#f3f3f3 70%,#ececec);border-right:1px solid #e2e2e2;border-bottom:2px solid #d9dada;"></div>
<div style="left:503px;top:583px;width:49px;height:39px;background:linear-gradient(#ffffff,#f7f7f7 8%,#f3f3f3 70%,#ececec);border-right:1px solid #e2e2e2;border-bottom:2px solid #d9dada;"></div>
<div style="left:503px;top:622px;width:49px;height:39px;background:linear-gradient(#ffffff,#f7f7f7 8%,#f3f3f3 70%,#ececec);border-right:1px solid #e2e2e2;border-bottom:2px solid #d9dada;"></div>
<div style="left:503px;top:661px;width:49px;height:39px;background:linear-gradient(#ffffff,#f7f7f7 8%,#f3f3f3 70%,#ececec);border-right:1px solid #e2e2e2;border-bottom:2px solid #d9dada;"></div>
<div style="left:503px;top:700px;width:49px;height:39px;background:linear-gradient(#ffffff,#f7f7f7 8%,#f3f3f3 70%,#ececec);border-right:1px solid #e2e2e2;border-bottom:2px solid #d9dada;"></div>
<div style="left:503px;top:739px;width:49px;height:39px;background:linear-gradient(#ffffff,#f7f7f7 8%,#f3f3f3 70%,#ececec);border-right:1px solid #e2e2e2;border-bottom:2px solid #d9dada;"></div>
<div style="left:503px;top:778px;width:49px;height:39px;background:linear-gradient(#ffffff,#f7f7f7 8%,#f3f3f3 70%,#ececec);border-right:1px solid #e2e2e2;border-bottom:2px solid #d9dada;"></div>
<div style="left:503px;top:817px;width:49px;height:39px;background:linear-gradient(#ffffff,#f7f7f7 8%,#f3f3f3 70%,#ececec);border-right:1px solid #e2e2e2;border-bottom:2px solid #d9dada;"></div>
<div style="left:503px;top:856px;width:49px;height:39px;background:linear-gradient(#ffffff,#f7f7f7 8%,#f3f3f3 70%,#ececec);border-right:1px solid #e2e2e2;border-bottom:2px solid #d9dada;"></div>
<div style="left:503px;top:895px;width:49px;height:39px;background:linear-gradient(#ffffff,#f7f7f7 8%,#f3f3f3 70%,#ececec);border-right:1px solid #e2e2e2;border-bottom:2px solid #d9dada;"></div>
<div style="left:503px;top:934px;width:49px;height:39px;background:linear-gradient(#ffffff,#f7f7f7 8%,#f3f3f3 70%,#ececec);border-right:1px solid #e2e2e2;border-bottom:2px solid #d9dada;"></div>
<div style="left:503px;top:973px;width:49px;height:33px;background:linear-gradient(#ffffff,#f7f7f7 8%,#f3f3f3 70%,#ececec);border-right:1px solid #e2e2e2;"></div>
<div style="left:553px;top:427px;width:1628px;height:1px;border-top:1px dotted #a8a8a8;"></div>
<div style="left:553px;top:466px;width:1628px;height:1px;border-top:1px dotted #a8a8a8;"></div>
<div style="left:553px;top:505px;width:1628px;height:1px;border-top:1px dotted #a8a8a8;"></div>
<div style="left:553px;top:544px;width:1628px;height:1px;border-top:1px dotted #a8a8a8;"></div>
<div style="left:553px;top:583px;width:1628px;height:1px;border-top:1px dotted #a8a8a8;"></div>
<div style="left:553px;top:622px;width:1628px;height:1px;border-top:1px dotted #a8a8a8;"></div>
<div style="left:553px;top:661px;width:1628px;height:1px;border-top:1px dotted #a8a8a8;"></div>
<div style="left:553px;top:700px;width:1628px;height:1px;border-top:1px dotted #a8a8a8;"></div>
<div style="left:553px;top:739px;width:1628px;height:1px;border-top:1px dotted #a8a8a8;"></div>
<div style="left:553px;top:778px;width:1628px;height:1px;border-top:1px dotted #a8a8a8;"></div>
<div style="left:553px;top:817px;width:1628px;height:1px;border-top:1px dotted #a8a8a8;"></div>
<div style="left:553px;top:856px;width:1628px;height:1px;border-top:1px dotted #a8a8a8;"></div>
<div style="left:553px;top:895px;width:1628px;height:1px;border-top:1px dotted #a8a8a8;"></div>
<div style="left:553px;top:934px;width:1628px;height:1px;border-top:1px dotted #a8a8a8;"></div>
<div style="left:553px;top:973px;width:1628px;height:1px;border-top:1px dotted #a8a8a8;"></div>
<div style="left:552px;top:389px;width:1px;height:617px;border-left:1px dotted #b0b0b0;"></div>
<div style="left:670px;top:389px;width:1px;height:617px;border-left:1px dotted #b0b0b0;"></div>
<div style="left:859px;top:389px;width:1px;height:617px;border-left:1px dotted #b0b0b0;"></div>
<div style="left:1143px;top:389px;width:1px;height:617px;border-left:1px dotted #b0b0b0;"></div>
<div style="left:1427px;top:389px;width:1px;height:617px;border-left:1px dotted #b0b0b0;"></div>
<div style="left:1711px;top:389px;width:1px;height:617px;border-left:1px dotted #b0b0b0;"></div>
<div style="left:1995px;top:389px;width:1px;height:617px;border-left:1px dotted #b0b0b0;"></div>
<div style="left:859px;top:467px;width:1px;height:38px;background:#fff;"></div>
<div style="left:859px;top:545px;width:1px;height:38px;background:#fff;"></div>
<div style="left:1143px;top:545px;width:1px;height:38px;background:#fff;"></div>
<div style="left:670px;top:388px;width:474px;height:40px;background:#87cefa;border:1px solid #ababab;"></div>
<div style="left:1109px;top:388px;width:35px;height:40px;background:linear-gradient(#efefef,#ebebeb 80%,#e4e4e4);border:2px solid #adadad;border-left-width:1px;"></div>
<svg style="left:1115.5px;top:397.6px" width="20" height="20" viewBox="0 0 20 20"><path d="M5.30 7.10 L10.00 12.90 L14.70 7.10" fill="none" stroke="#5c5c5c" stroke-width="2.9" stroke-linejoin="miter"/></svg>
<span class="t dv" style="top:355.28px;font-size:24px;line-height:24px;color:#000;left:583.8px;letter-spacing:0.115px;">Flow</span>
<span class="t dv" style="top:355.28px;font-size:24px;line-height:24px;color:#000;left:738px;letter-spacing:0.847px;">Type</span>
<span class="t dv" style="top:355.28px;font-size:24px;line-height:24px;color:#000;left:962.8px;letter-spacing:0.089px;">Object</span>
<span class="t dv" style="top:355.28px;font-size:24px;line-height:24px;color:#000;left:1249.6px;letter-spacing:0.009px;">Action</span>
<span class="t dv" style="top:355.28px;font-size:24px;line-height:24px;color:#000;left:1495.8px;letter-spacing:0.013px;">ParamName</span>
<span class="t dv" style="top:355.28px;font-size:24px;line-height:24px;color:#000;left:1785.7px;letter-spacing:0.611px;">ParamType</span>
<div style="left:1995px;top:346px;width:185px;height:40px;overflow:hidden">
<span class="t dv" style="top:9.28px;font-size:24px;line-height:24px;color:#000;left:71.3px;letter-spacing:0.198px;">ParamValue</span>
</div>
<span class="t dv" style="top:395.98px;font-size:24px;line-height:24px;color:#000;left:503px;width:63.6px;text-align:center;">2</span>
<span class="t dv" style="top:434.98px;font-size:24px;line-height:24px;color:#000;left:503px;width:63.6px;text-align:center;">3</span>
<span class="t dv" style="top:473.98px;font-size:24px;line-height:24px;color:#000;left:503px;width:63.6px;text-align:center;">4</span>
<span class="t dv" style="top:512.98px;font-size:24px;line-height:24px;color:#000;left:503px;width:63.6px;text-align:center;">5</span>
<span class="t dv" style="top:551.98px;font-size:24px;line-height:24px;color:#000;left:503px;width:63.6px;text-align:center;">6</span>
<span class="t dv" style="top:590.98px;font-size:24px;line-height:24px;color:#000;left:503px;width:63.6px;text-align:center;">7</span>
<span class="t dv" style="top:629.98px;font-size:24px;line-height:24px;color:#000;left:503px;width:63.6px;text-align:center;">8</span>
<span class="t dv" style="top:668.98px;font-size:24px;line-height:24px;color:#000;left:503px;width:63.6px;text-align:center;">9</span>
<span class="t dv" style="top:707.98px;font-size:24px;line-height:24px;color:#000;left:503px;width:63.6px;text-align:center;">10</span>
<span class="t dv" style="top:746.98px;font-size:24px;line-height:24px;color:#000;left:503px;width:63.6px;text-align:center;">11</span>
<span class="t dv" style="top:785.98px;font-size:24px;line-height:24px;color:#000;left:503px;width:63.6px;text-align:center;">12</span>
<span class="t dv" style="top:824.98px;font-size:24px;line-height:24px;color:#000;left:503px;width:63.6px;text-align:center;">13</span>
<span class="t dv" style="top:863.98px;font-size:24px;line-height:24px;color:#000;left:503px;width:63.6px;text-align:center;">14</span>
<span class="t dv" style="top:902.98px;font-size:24px;line-height:24px;color:#000;left:503px;width:63.6px;text-align:center;">15</span>
<span class="t dv" style="top:941.98px;font-size:24px;line-height:24px;color:#000;left:503px;width:63.6px;text-align:center;">16</span>
<div style="left:503px;top:973px;width:70px;height:33px;overflow:hidden">
<span class="t dv" style="top:7.98px;font-size:24px;line-height:24px;color:#000;left:0px;width:63.6px;text-align:center;">17</span>
</div>
<span class="t dv" style="top:392.98px;font-size:24px;line-height:24px;color:#006400;left:560.41px;font-style:italic;transform:scaleX(0.8889);transform-origin:0 0;">#</span>
<span class="t dv" style="top:392.98px;font-size:24px;line-height:24px;color:#006400;left:677.5px;letter-spacing:0.244px;font-style:italic;">User clicks on &#x27;Social Info&#x27;</span>
<span class="t dv" style="top:470.98px;font-size:24px;line-height:24px;color:#006400;left:560.41px;font-style:italic;transform:scaleX(0.8889);transform-origin:0 0;">#</span>
<span class="t dv" style="top:470.98px;font-size:24px;line-height:24px;color:#006400;left:677.5px;letter-spacing:0.061px;font-style:italic;">User clicks on &#x27;General&#x27;</span>
<span class="t dv" style="top:548.98px;font-size:24px;line-height:24px;color:#006400;left:560.41px;font-style:italic;transform:scaleX(0.8889);transform-origin:0 0;">#</span>
<span class="t dv" style="top:548.98px;font-size:24px;line-height:24px;color:#006400;left:677.5px;letter-spacing:0.092px;font-style:italic;">User clicks on &#x27;Email: Cathan@alpineskihouse.com&#x27;</span>
<span class="t dv" style="top:431.98px;font-size:24px;line-height:24px;color:#800000;left:677.6px;letter-spacing:-0.031px;">Action</span>
<span class="t sf" style="top:439.6px;font-size:15px;line-height:15px;color:#111;left:864px;font-weight:bold;">A</span>
<span class="t dv" style="top:431.98px;font-size:24px;line-height:24px;color:#000;left:881.8px;letter-spacing:0.581px;">Social_Info</span>
<span class="t dv" style="top:431.98px;font-size:24px;line-height:24px;color:#0000f4;left:1148.5px;letter-spacing:0.341px;">DoClick</span>
<span class="t dv" style="top:509.98px;font-size:24px;line-height:24px;color:#800000;left:677.6px;letter-spacing:-0.031px;">Action</span>
<span class="t sf" style="top:517.6px;font-size:15px;line-height:15px;color:#111;left:864px;font-weight:bold;">A</span>
<span class="t dv" style="top:509.98px;font-size:24px;line-height:24px;color:#000;left:881.8px;letter-spacing:-0.169px;">General</span>
<span class="t dv" style="top:509.98px;font-size:24px;line-height:24px;color:#0000f4;left:1148.5px;letter-spacing:0.341px;">DoClick</span>
<span class="t dv" style="top:587.98px;font-size:24px;line-height:24px;color:#800000;left:677.6px;letter-spacing:-0.031px;">Action</span>
<span class="t sf" style="top:595.6px;font-size:15px;line-height:15px;color:#111;left:864px;font-weight:bold;">A</span>
<span class="t dv" style="top:587.98px;font-size:24px;line-height:24px;color:#000;left:880.8px;letter-spacing:0.754px;">Email__Cathan_al...</span>
<span class="t dv" style="top:587.98px;font-size:24px;line-height:24px;color:#0000f4;left:1148.5px;letter-spacing:0.341px;">DoClick</span>
<div style="left:2181px;top:346px;width:33px;height:660px;background:#f0f0f0;"></div>
<div style="left:2181px;top:380px;width:32px;height:295px;background:#cdcdcd;"></div>
<svg style="left:2187.5px;top:354.6px" width="20" height="20" viewBox="0 0 20 20"><path d="M5.30 12.90 L10.00 7.10 L14.70 12.90" fill="none" stroke="#5c5c5c" stroke-width="2.9" stroke-linejoin="miter"/></svg>
<svg style="left:2187.6px;top:979.4px" width="20" height="20" viewBox="0 0 20 20"><path d="M5.30 7.10 L10.00 12.90 L14.70 7.10" fill="none" stroke="#5c5c5c" stroke-width="2.9" stroke-linejoin="miter"/></svg>
<div style="left:503px;top:1007px;width:1711px;height:33px;background:#f0f0f0;"></div>
<div style="left:537px;top:1007px;width:1315px;height:32px;background:#cdcdcd;"></div>
<svg style="left:509.7px;top:1013.6px" width="20" height="20" viewBox="0 0 20 20"><path d="M12.90 5.30 L7.10 10.00 L12.90 14.70" fill="none" stroke="#5c5c5c" stroke-width="2.9" stroke-linejoin="miter"/></svg>
<svg style="left:2152px;top:1013.5px" width="20" height="20" viewBox="0 0 20 20"><path d="M7.10 5.30 L12.90 10.00 L7.10 14.70" fill="none" stroke="#5c5c5c" stroke-width="2.9" stroke-linejoin="miter"/></svg>
<div style="left:500px;top:1048px;width:1716px;height:33px;background:#e1e2e2;"></div>
<span class="t ls" style="top:1051.68px;font-size:24px;line-height:24px;color:#343946;left:504.8px;letter-spacing:-0.136px;">Output</span>
<div style="left:500px;top:1084px;width:362px;height:41px;background:#fff;border-radius:0 4px 4px 0;"></div>
<div style="left:512px;top:1085px;width:261px;height:39px;background:#fff;border:1px solid #a9a9a9;"></div>
<div style="left:503.5px;top:1087px;width:5.5px;height:37px;background-image:radial-gradient(circle,#bdbdbd 0.75px,rgba(255,255,255,0) 0.9px);background-size:2.6px 2.6px;"></div>
<svg style="left:0;top:0" width="870" height="1120" viewBox="0 0 870 1120"><g><ellipse cx="781" cy="1105" rx="3.4" ry="4.6" transform="rotate(-18 781 1105)" fill="#d9891f" stroke="#8a5a10" stroke-width="0.8"/><ellipse cx="788" cy="1105.5" rx="3.4" ry="4.6" transform="rotate(14 788 1105.5)" fill="#e8a63a" stroke="#8a5a10" stroke-width="0.8"/><path d="M779.5 1099.5 Q784.5 1095.5 789.5 1099.8" fill="none" stroke="#c47a17" stroke-width="2.6"/><ellipse cx="780.2" cy="1108" rx="1.6" ry="1.8" fill="#fff2d8"/><ellipse cx="788.6" cy="1108.5" rx="1.6" ry="1.8" fill="#fff2d8"/></g><rect x="802.5" y="1097.5" width="8.5" height="11" fill="#e9f1fb" stroke="#8aa0c4" stroke-width="0.9"/><rect x="799.5" y="1100" width="8.5" height="11" fill="#f4f8fd" stroke="#8aa0c4" stroke-width="0.9"/><path d="M801 1104 h5.5 M801 1106.5 h5.5 M801 1109 h5.5" stroke="#a9c4ea" stroke-width="1"/><path d="M820.5 1101.5 L828.5 1096.5 L835 1106 L827 1111.5Z" fill="#8cc6f7" stroke="#3a76c4" stroke-width="0.9"/><path d="M822 1102.5 L826.5 1109.5 L829 1108" fill="none" stroke="#d8ecff" stroke-width="1"/><rect x="846.5" y="1096.5" width="9" height="12" fill="#79aeee" stroke="#3f6fbe" stroke-width="0.9"/><rect x="842.5" y="1098.5" width="9" height="12" fill="#9cc6f5" stroke="#3f6fbe" stroke-width="0.9"/><path d="M844 1102 h6 M844 1104.5 h6 M844 1107 h6" stroke="#5b8fdc" stroke-width="1"/></svg>
<div style="left:500px;top:1126px;width:1716px;height:61px;background:#f0f0f0;border-top:2px solid #6e6e6e;border-left:2px solid #6e6e6e;"></div>
<div style="left:500px;top:1187px;width:1716px;height:3px;background:#fff;"></div>
<div style="left:2180px;top:1128px;width:1px;height:58px;background:#e4e4e4;"></div>
<svg style="left:2187.8px;top:1133.5px" width="20" height="20" viewBox="0 0 20 20"><path d="M5.30 12.90 L10.00 7.10 L14.70 12.90" fill="none" stroke="#5c5c5c" stroke-width="2.9" stroke-linejoin="miter"/></svg>
<svg style="left:2187.8px;top:1160.9px" width="20" height="20" viewBox="0 0 20 20"><path d="M5.30 7.10 L10.00 12.90 L14.70 7.10" fill="none" stroke="#5c5c5c" stroke-width="2.9" stroke-linejoin="miter"/></svg>
<span class="t ls" style="top:1131.88px;font-size:24px;line-height:24px;color:#000;left:510.5px;letter-spacing:-0.007px;">SeS Recorder Starting...</span>
<div style="left:590px;top:1190px;width:1626px;height:1px;background:#c4c4c4;"></div>
<div style="left:591px;top:1191px;width:350px;height:34px;background:#e1e2e2;"></div>
<div style="left:502px;top:1187px;width:89px;height:38px;background:#fff;border:1px solid #aaa;border-top:none;border-right:none;"></div>
<div style="left:590px;top:1190px;width:1px;height:35px;background:#aaa;"></div>
<span class="t ls" style="top:1197.38px;font-size:24px;line-height:24px;color:#8a4789;left:509.8px;letter-spacing:-0.076px;">Output</span>
<span class="t ls" style="top:1197.38px;font-size:24px;line-height:24px;color:#343946;left:599px;letter-spacing:-0.068px;">Warnings</span>
<span class="t ls" style="top:1197.38px;font-size:24px;line-height:24px;color:#343946;left:716px;letter-spacing:-0.266px;">Errors</span>
<span class="t ls" style="top:1197.38px;font-size:24px;line-height:24px;color:#343946;left:798px;letter-spacing:-0.08px;">Find Results</span>
<svg style="left:530px;top:30px" width="34" height="46" viewBox="0 0 34 46"><path d="M4.8 5 L4.8 37 L11.9 30.2 L16.9 41.5 L21.5 39.3 L17 29 L28 29Z" fill="#fff" stroke="#000" stroke-width="1.15" stroke-linejoin="miter"/></svg>
</body></html>
